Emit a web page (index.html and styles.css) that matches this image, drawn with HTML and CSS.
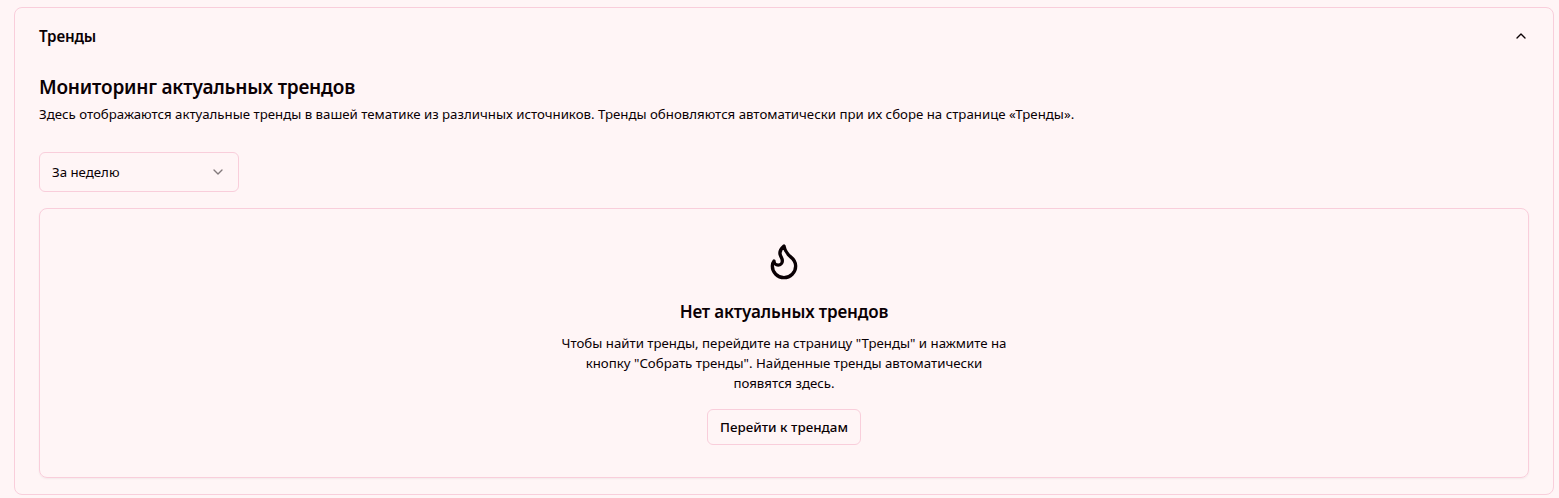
FILE: index.html
```html
<!DOCTYPE html>
<html lang="ru">
<head>
<meta charset="utf-8">
<title>Тренды</title>
<link rel="stylesheet" href="styles.css">
</head>
<body>
<section class="panel">
  <header class="panel-header">
    <h1 class="panel-title">Тренды</h1>
    <svg class="icon" viewBox="0 0 24 24"><path d="m18 15-6-6-6 6"/></svg>
  </header>
  <h2 class="heading">Мониторинг актуальных трендов</h2>
  <p class="description">Здесь отображаются актуальные тренды в вашей тематике из различных источников. Тренды обновляются автоматически при их сборе на странице «Тренды».</p>
  <button class="select" type="button">
    <span>За неделю</span>
    <svg class="icon icon-muted" viewBox="0 0 24 24"><path d="m6 9 6 6 6-6"/></svg>
  </button>
  <div class="empty">
    <svg class="icon icon-flame" viewBox="0 0 24 24"><path d="M8.5 14.5A2.5 2.5 0 0 0 11 12c0-1.38-.5-2-1-3-1.072-2.143-.224-4.054 2-6 .5 2.5 2 4.9 4 6.5 2 1.6 3 3.5 3 5.5a7 7 0 1 1-14 0c0-1.153.433-2.294 1-3a2.5 2.5 0 0 0 2.5 2.5z"/></svg>
    <h3 class="empty-title">Нет актуальных трендов</h3>
    <p class="empty-text">Чтобы найти тренды, перейдите на страницу "Тренды" и нажмите на<br>кнопку "Собрать тренды". Найденные тренды автоматически<br>появятся здесь.</p>
    <button class="action" type="button">Перейти к трендам</button>
  </div>
</section>
</body>
</html>
```
FILE: styles.css
```css
* { box-sizing: border-box; margin: 0; }
body {
  height: 498px;
  padding: 7px 5px 0 14px;
  overflow: hidden;
  background: #fff5f6;
  color: #0a0004;
  font-family: "Noto Sans", "Open Sans", sans-serif;
}
button { font: inherit; color: inherit; background: transparent; }
.panel {
  height: 488px;
  padding: 16px 24px 0;
  border: 1px solid #f9cedb;
  border-radius: 8px;
}
.panel-header {
  display: flex;
  align-items: center;
  justify-content: space-between;
  height: 24px;
  margin-bottom: 25px;
}
.panel-title { font-size: 15.2px; line-height: 24px; font-weight: 600; letter-spacing: -.15px; white-space: nowrap; }
.icon {
  display: block;
  flex: none;
  width: 16px;
  height: 16px;
  fill: none;
  stroke: currentColor;
  stroke-width: 2;
  stroke-linecap: round;
  stroke-linejoin: round;
}
.icon-muted { opacity: .5; }
.icon-flame { width: 40px; height: 40px; }
.heading { font-size: 19px; line-height: 28px; font-weight: 600; letter-spacing: -.2px; white-space: nowrap; }
.description { margin-top: 3px; font-size: 13.26px; line-height: 20px; white-space: nowrap; }
.select {
  display: flex;
  align-items: center;
  justify-content: space-between;
  width: 200px;
  height: 40px;
  margin: 28px 0 16px;
  padding: 0 12px;
  border: 1px solid #f9cedb;
  border-radius: 6px;
  font-size: 13.26px;
}
.empty {
  display: flex;
  flex-direction: column;
  align-items: center;
  height: 270px;
  padding: 32px;
  border: 1px solid #f9cedb;
  border-radius: 8px;
  box-shadow: 0 1px 2px rgba(0, 0, 0, .05);
}
.empty-title { margin: 17px 0 7px; font-size: 17px; line-height: 28px; font-weight: 600; letter-spacing: -.13px; white-space: nowrap; }
.empty-text { font-size: 13.26px; line-height: 20px; text-align: center; white-space: nowrap; }
.action {
  flex: none;
  width: 154px;
  height: 36px;
  margin-top: 16px;
  padding: 0;
  border: 1px solid #f9cedb;
  border-radius: 6px;
  font-size: 13.4px;
  font-weight: 500;
  white-space: nowrap;
}
```
